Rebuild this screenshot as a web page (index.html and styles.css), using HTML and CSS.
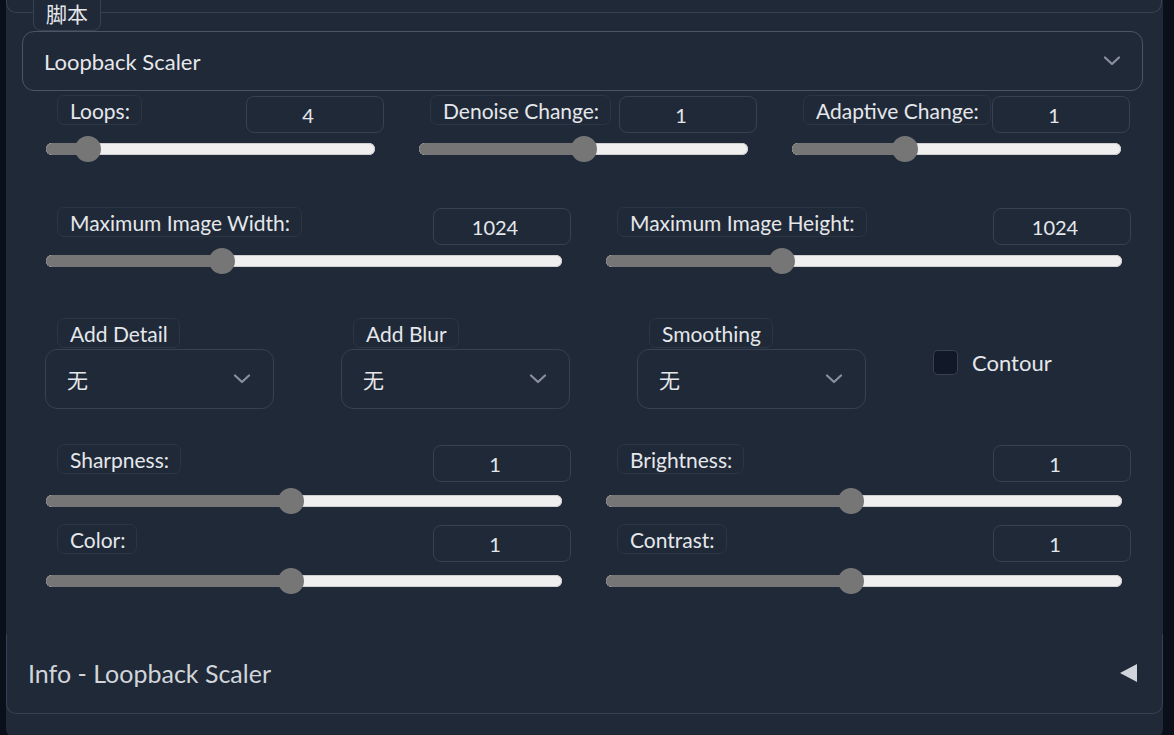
FILE: index.html
```html
<!DOCTYPE html>
<html lang="zh">
<head>
<meta charset="utf-8">
<title>Loopback Scaler</title>
<link rel="stylesheet" href="styles.css">
</head>
<body>
<div class="panel">
  <div class="top-block"></div>
  <div class="script">
    <span class="block-label script-label">脚本</span>
    <div class="select main-select">
      <span>Loopback Scaler</span>
      <svg class="chev" width="18" height="10" viewBox="0 0 18 10"><path d="M2 1.5 L9 8 L16 1.5" fill="none" stroke="#8a919d" stroke-width="2.2" stroke-linecap="round" stroke-linejoin="round"/></svg>
    </div>
  </div>

  <div class="params">
    <div class="row cols3">
      <div class="slider">
        <div class="head"><span class="block-label">Loops:</span><div class="num">4</div></div>
        <div class="range" style="--v:0.097"><div class="fill"></div><div class="thumb"></div></div>
      </div>
      <div class="slider">
        <div class="head"><span class="block-label">Denoise Change:</span><div class="num">1</div></div>
        <div class="range" style="--v:0.5"><div class="fill"></div><div class="thumb"></div></div>
      </div>
      <div class="slider">
        <div class="head"><span class="block-label">Adaptive Change:</span><div class="num">1</div></div>
        <div class="range" style="--v:0.33"><div class="fill"></div><div class="thumb"></div></div>
      </div>
    </div>

    <div class="row cols2 gap-row2">
      <div class="slider">
        <div class="head"><span class="block-label">Maximum Image Width:</span><div class="num">1024</div></div>
        <div class="range" style="--v:0.333"><div class="fill"></div><div class="thumb"></div></div>
      </div>
      <div class="slider">
        <div class="head"><span class="block-label">Maximum Image Height:</span><div class="num">1024</div></div>
        <div class="range" style="--v:0.333"><div class="fill"></div><div class="thumb"></div></div>
      </div>
    </div>

    <div class="row cols4">
      <div class="dd">
        <span class="block-label">Add Detail</span>
        <div class="select small-select"><span>无</span><svg class="chev" width="18" height="10" viewBox="0 0 18 10"><path d="M2 1.5 L9 8 L16 1.5" fill="none" stroke="#8a919d" stroke-width="2.2" stroke-linecap="round" stroke-linejoin="round"/></svg></div>
      </div>
      <div class="dd">
        <span class="block-label">Add Blur</span>
        <div class="select small-select"><span>无</span><svg class="chev" width="18" height="10" viewBox="0 0 18 10"><path d="M2 1.5 L9 8 L16 1.5" fill="none" stroke="#8a919d" stroke-width="2.2" stroke-linecap="round" stroke-linejoin="round"/></svg></div>
      </div>
      <div class="dd">
        <span class="block-label">Smoothing</span>
        <div class="select small-select"><span>无</span><svg class="chev" width="18" height="10" viewBox="0 0 18 10"><path d="M2 1.5 L9 8 L16 1.5" fill="none" stroke="#8a919d" stroke-width="2.2" stroke-linecap="round" stroke-linejoin="round"/></svg></div>
      </div>
      <label class="check">
        <span class="box"></span>
        <span>Contour</span>
      </label>
    </div>

    <div class="row cols2 gap-row4">
      <div class="stack">
        <div class="slider">
          <div class="head"><span class="block-label">Sharpness:</span><div class="num">1</div></div>
          <div class="range" style="--v:0.474"><div class="fill"></div><div class="thumb"></div></div>
        </div>
        <div class="slider">
          <div class="head"><span class="block-label">Color:</span><div class="num">1</div></div>
          <div class="range" style="--v:0.474"><div class="fill"></div><div class="thumb"></div></div>
        </div>
      </div>
      <div class="stack">
        <div class="slider">
          <div class="head"><span class="block-label">Brightness:</span><div class="num">1</div></div>
          <div class="range" style="--v:0.474"><div class="fill"></div><div class="thumb"></div></div>
        </div>
        <div class="slider">
          <div class="head"><span class="block-label">Contrast:</span><div class="num">1</div></div>
          <div class="range" style="--v:0.474"><div class="fill"></div><div class="thumb"></div></div>
        </div>
      </div>
    </div>
  </div>

  <div class="accordion">
    <span>Info - Loopback Scaler</span>
    <span class="tri"></span>
  </div>
</div>
</body>
</html>
```

FILE: styles.css
```css
* { box-sizing: border-box; }

html, body {
  margin: 0;
  height: 735px;
  overflow: hidden;
}

body {
  background: #0b0f19;
  font-family: "Lato", "Noto Sans CJK SC", sans-serif;
  color: #e5e7eb;
}

.panel {
  margin-left: 6px;
  width: 1157px;
  height: 738px;
  background: #1f2937;
  border-radius: 0 0 9px 9px;
  display: flex;
  flex-direction: column;
}

.top-block {
  height: 13px;
  width: 1156px;
  border: 1px solid #374151;
  border-top: none;
  border-radius: 0 0 10px 10px;
}

.script {
  position: relative;
  padding: 18px 0 0 16px;
}

.block-label {
  display: inline-flex;
  align-items: center;
  height: 30px;
  padding: 0 11px 0 12px;
  border: 1px solid #2b3544;
  border-radius: 7px;
  background: #1f2937;
  font-size: 21px;
  color: #e5e7eb;
  white-space: nowrap;
  line-height: 1;
}

.script-label {
  position: absolute;
  left: 27px;
  top: -17px;
  height: 35px;
  padding: 0 12px 0;
  border-color: #374151;
  border-radius: 0 0 8px 8px;
  font-family: "Noto Sans CJK SC", sans-serif;
  font-size: 21px;
  z-index: 1;
}

.select {
  display: flex;
  align-items: center;
  justify-content: space-between;
  border: 1px solid #4b5563;
  border-radius: 12px;
  background: #1f2937;
  color: #e5e7eb;
}

.main-select {
  width: 1121px;
  height: 60px;
  padding: 0 21px 0 21px;
  font-size: 22px;
}

.chev { display: block; }

.params {
  padding: 4px 33px 0 40px;
}

.row { display: grid; }

.cols3 {
  grid-template-columns: 338px 338px 338px;
  column-gap: 35px;
}

.cols2 {
  grid-template-columns: 525px 525px;
  column-gap: 35px;
}

.gap-row2 { margin-top: 45px; }

.gap-row4 { margin-top: 35px; }

.cols4 {
  margin-top: 44px;
  margin-left: -1px;
  grid-template-columns: 229px 229px 229px 229px;
  column-gap: 67px;
}

.stack {
  display: flex;
  flex-direction: column;
  gap: 10px;
}

.stack .range { margin-top: 6px; }

.slider {
  display: flex;
  flex-direction: column;
}

.head {
  display: flex;
  justify-content: space-between;
  align-items: flex-start;
  height: 38px;
}

.head .block-label { margin-left: 11px; }

.num {
  margin-top: 1px;
  width: 138px;
  height: 37px;
  border: 1px solid #374151;
  border-radius: 8px;
  display: flex;
  align-items: center;
  justify-content: center;
  font-size: 20px;
  padding: 0 14px 0 0;
  color: #e5e7eb;
}

.range {
  position: relative;
  height: 26px;
  margin: 3px 9px 0 0;
}

.range::before {
  content: "";
  position: absolute;
  left: 0;
  right: 0;
  top: 7px;
  height: 12px;
  border-radius: 6px;
  background: #efefef;
  box-shadow: inset 0 0 0 1px #cfcfcf;
}

.fill {
  position: absolute;
  left: 0;
  top: 7px;
  height: 12px;
  width: calc(13px + var(--v) * (100% - 26px));
  background: #767676;
  border-radius: 6px 0 0 6px;
}

.thumb {
  position: absolute;
  top: 0;
  left: calc(var(--v) * (100% - 26px));
  width: 26px;
  height: 26px;
  border-radius: 50%;
  background: #767676;
}

.dd {
  display: flex;
  flex-direction: column;
  align-items: flex-start;
}

.dd .block-label { margin-left: 12px; }

.small-select {
  width: 229px;
  height: 60px;
  margin-top: 1px;
  padding: 0 22px 0 21px;
  border-color: #374151;
  font-family: "Noto Sans CJK SC", sans-serif;
  font-size: 21px;
}

.check {
  display: flex;
  align-items: center;
  gap: 14px;
  margin-top: 31px;
  height: 26px;
  font-size: 22px;
  color: #e5e7eb;
  align-self: start;
}

.check .box {
  width: 25px;
  height: 25px;
  border: 1px solid #374151;
  border-radius: 5px;
  background: #111827;
}

.accordion {
  margin-top: 40px;
  height: 80px;
  border: 1px solid #374151;
  border-top: none;
  border-radius: 0 0 10px 10px;
  display: flex;
  align-items: center;
  justify-content: space-between;
  padding: 0 25px 2px 21px;
  font-size: 25px;
  color: #d1d5db;
}

.tri {
  width: 0;
  height: 0;
  border-top: 9px solid transparent;
  border-bottom: 9px solid transparent;
  border-right: 17px solid #d1d5db;
}
```
